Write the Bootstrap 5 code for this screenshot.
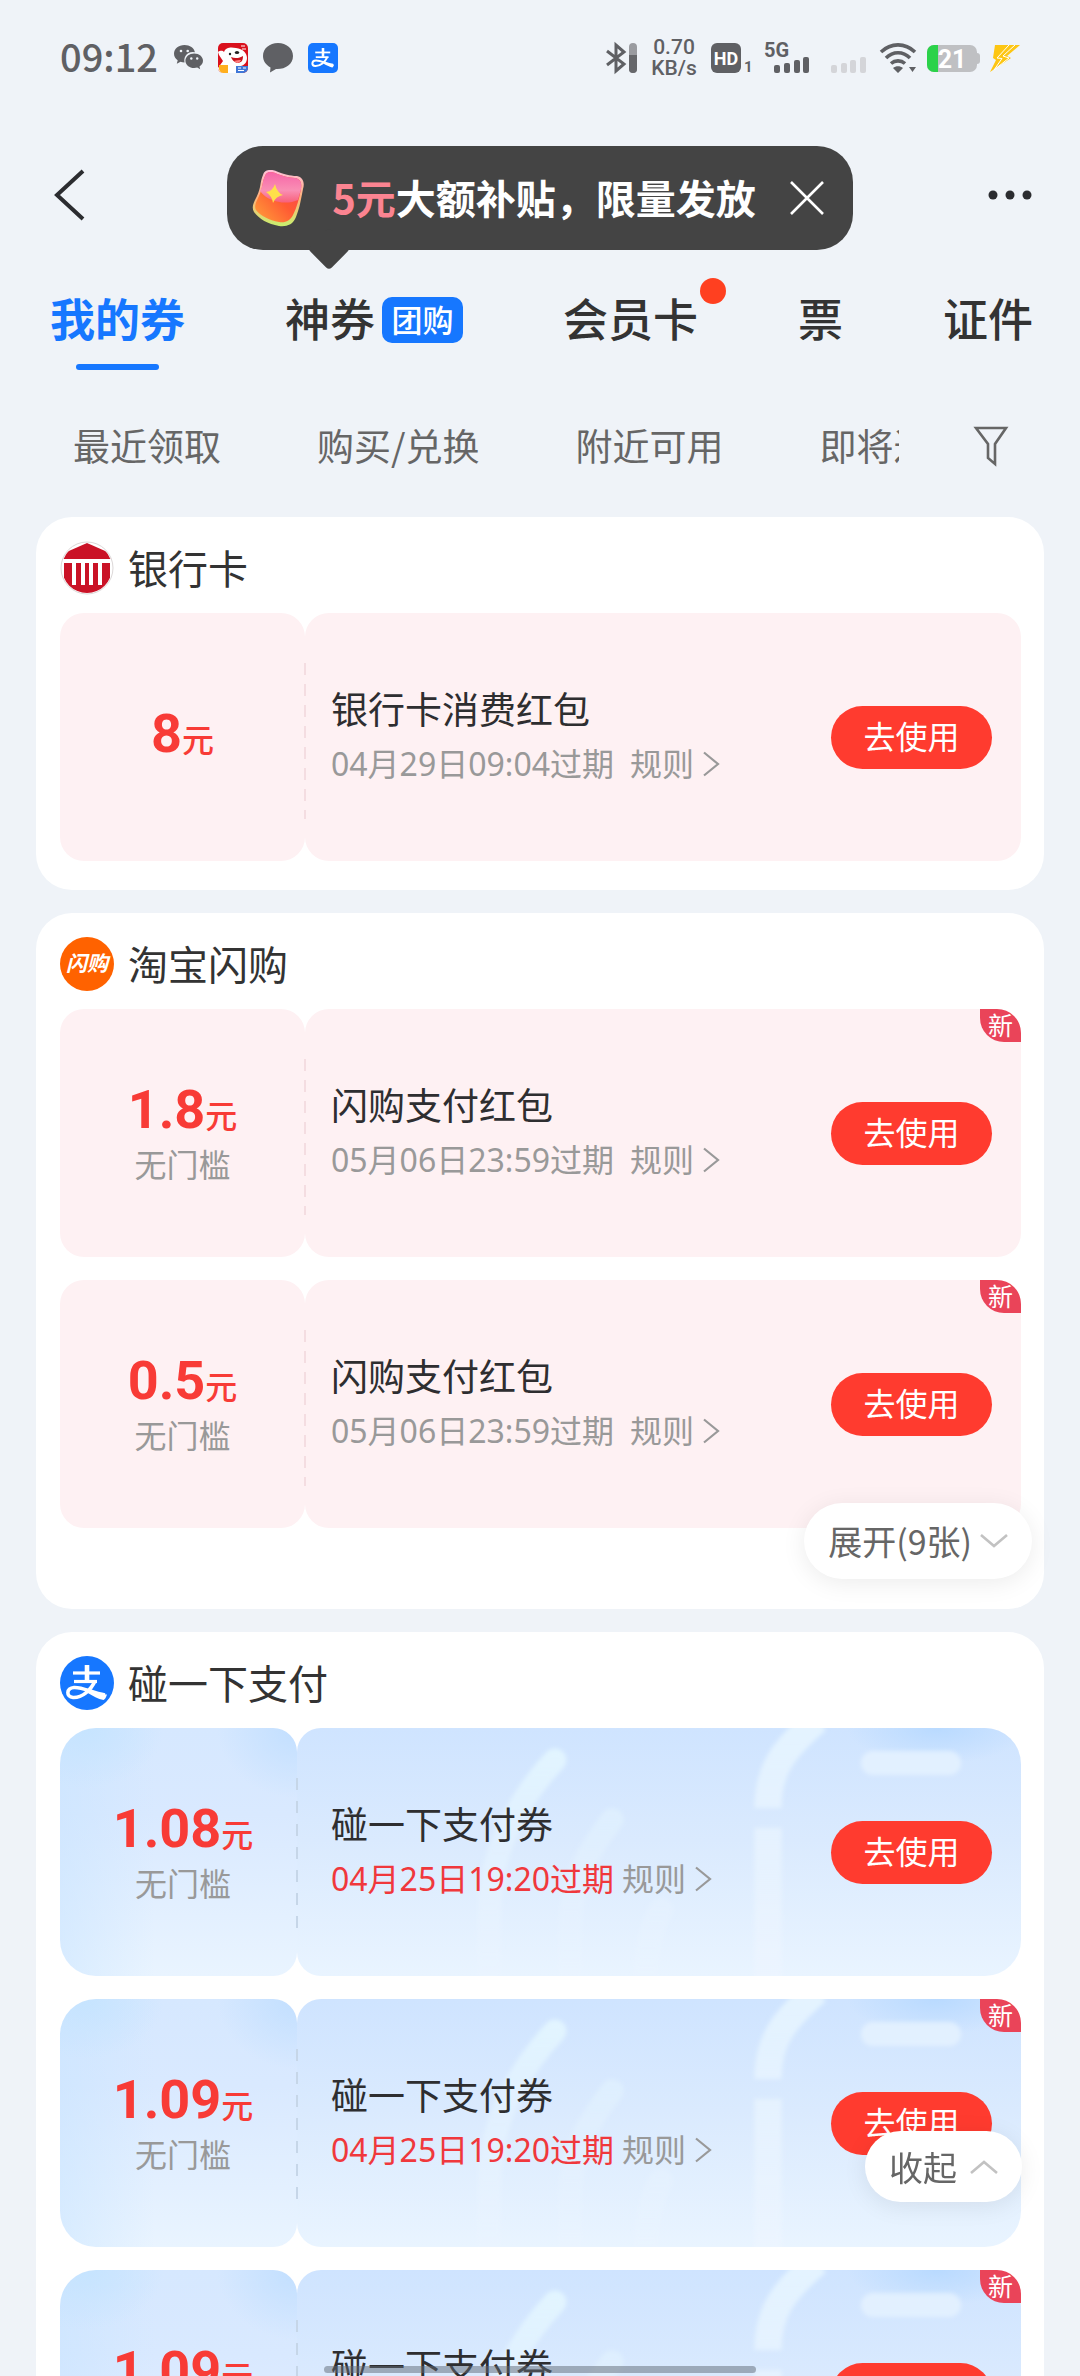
<!DOCTYPE html>
<html lang="zh-CN">
<head>
<meta charset="utf-8">
<meta name="viewport" content="width=device-width, initial-scale=1">
<title>我的券</title>
<link rel="stylesheet" href="https://cdn.jsdelivr.net/npm/bootstrap@5.3.0/dist/css/bootstrap.min.css">
<style>
  body { font-family: "Noto Sans", "Noto Sans CJK SC", sans-serif; color: #333; background: #eff3f8; }
  a { color: inherit; text-decoration: none; }
  svg { display: block; flex: none; overflow: visible; }
  .screen { height: 100vh; overflow: hidden; }
  .cjk { font-family: "Noto Sans CJK SC", sans-serif; }

  /* system status bar */
  .status { height: 116px; padding-left: 60px; padding-right: 60px; color: #5f6064; }
  .clock { font-family: "Noto Sans CJK SC", sans-serif; font-size: 38px; line-height: 40px; height: 44px; font-weight: 500; width: 98px; }
  .speed { width: 52px; font-size: 21px; line-height: 21px; font-weight: 500; font-family: Roboto, sans-serif; white-space: nowrap; }

  /* top bar */
  .appbar { height: 164px; padding: 0 48px; }
  .bare { background: none; border: 0; padding: 0; color: #2b2c30; }
  .side { width: 48px; height: 60px; margin-bottom: 6px; }
  .tip { background: #444; color: #fff; border-radius: 36px; height: 104px; padding: 0 29px 0 25px; font-size: 40px; line-height: 48px; }
  .tip::after { content: ""; position: absolute; left: 87px; bottom: -14px; width: 30px; height: 30px; background: #444; border-radius: 4px; transform: rotate(45deg); }
  .tip b { position: relative; z-index: 1; }
  .tip .hot { color: #fb8491; }
  .tip-text { margin: 0 34px 3px 28px; }

  /* tabs and filters */
  .tabs { height: 90px; gap: 100px; padding: 13px 48px 0 50px; font-size: 45px; line-height: 50px; font-weight: 500; white-space: nowrap; }
  .tabs .on { color: #1677ff; font-weight: 700; }
  .tabs .on::after { content: ""; position: absolute; left: 26px; right: 26px; bottom: 0; height: 6px; border-radius: 3px; background: #1677ff; }
  .pill-tag { background: #1677ff; color: #fff; font-size: 31px; line-height: 44px; font-weight: 500; height: 46px; width: 81px; border-radius: 10px; text-align: center; margin-left: 7px; }
  .dot { position: absolute; width: 26px; height: 26px; border-radius: 50%; background: #ff4020; right: -28px; top: -7px; }
  .filters { height: 147px; padding: 5px 72px 0 73px; color: #666; font-size: 37px; line-height: 44px; white-space: nowrap; }
  .filter-list { gap: 96px; margin-right: 75px; padding-bottom: 3px; }

  /* coupon groups */
  .groups { padding: 0 36px; gap: 23px; }
  .group { background: #fff; border-radius: 36px; padding: 24px 23px 29px 24px; }
  .group.foldable { padding-bottom: 81px; }
  .group h2 { font-size: 40px; line-height: 54px; font-weight: 400; margin: 0 0 18px; height: 54px; gap: 14px; }
  .group h2 span { padding-bottom: 3px; }
  .coupons { gap: 23px; }
  .coupon { height: 248px; }
  .left, .right { position: relative; background: #fef1f3; border-radius: 24px; }
  .left { width: 245px; }
  .right { padding: 0 29px 0 26px; min-width: 0; }
  .right::before { content: ""; position: absolute; left: -1px; top: 50px; bottom: 42px; width: 2px; background: repeating-linear-gradient(#f4dde1 0 12px, transparent 12px 21px); }
  .blue .left { width: 237px; padding-left: 9px; border-radius: 36px 24px 24px 36px;
    background: radial-gradient(80px 70px at 100% 0, #c2dfff, transparent), radial-gradient(80px 60px at 10% 0, #c6e4ff, transparent), linear-gradient(90deg, rgba(200,228,255,.5), transparent 40%), linear-gradient(#d6e8ff, #d9e9ff 35%, #e9f4ff); }
  .blue .right { padding-left: 34px; border-radius: 24px 36px 36px 24px; background: linear-gradient(#cfe4ff, #daeafe 45%, #e9f4ff); }
  .blue .right::before { background: repeating-linear-gradient(#c6d6e8 0 12px, transparent 12px 23px); }
  .wash { position: absolute; left: 0; top: 0; width: 100%; height: 100%; border-radius: inherit; overflow: hidden; }
  .price { color: #f83b36; font-family: Roboto, "Noto Sans CJK SC", sans-serif; font-weight: 700; font-size: 54px; line-height: 58px; }
  .price small { font-size: 32px; font-weight: 500; }
  .limit { color: #999; font-size: 32px; line-height: 44px; margin-top: -5px; }
  .name { font-size: 37px; line-height: 56px; color: #2e2e30; }
  .lines { padding-bottom: 2px; }
  .meta { font-size: 32px; line-height: 56px; color: #999; white-space: nowrap; }
  .due { color: #f0383c; }
  .use { background: #ff3b2f; color: #fff; border: 0; border-radius: 32px; width: 161px; height: 63px; font-size: 32px; line-height: 56px; padding: 0 0 4px; position: relative; }
  .fresh { position: absolute; right: 0; top: 0; width: 41px; height: 33px; border-radius: 0 24px 0 24px; background: #ea4459; color: #fff; font-size: 25px; line-height: 31px; text-align: center; }
  .toggle { position: absolute; z-index: 3; background: #fff; color: #666; border: 0; border-radius: 40px; padding: 0 24px; font-size: 34px; line-height: 72px; gap: 8px; box-shadow: 0 4px 24px rgba(0,0,0,.08); white-space: nowrap; }
  .unfold { right: 12px; bottom: 30px; height: 76px; }
  .fold { position: fixed; right: 58px; bottom: 174px; height: 71px; gap: 13px; }
  .home { position: fixed; z-index: 4; left: 30%; right: 30%; bottom: 3px; height: 7px; border-radius: 4px; background: rgba(95,105,118,.5); }
</style>
<script src="https://cdn.jsdelivr.net/npm/bootstrap@5.3.0/dist/js/bootstrap.bundle.min.js"></script>
</head>
<body>
<svg width="0" height="0" class="position-absolute" aria-hidden="true">
  <defs>
    <linearGradient id="gFade" gradientUnits="userSpaceOnUse" x1="0" y1="0" x2="0" y2="248"><stop offset="0" stop-color="#e6f5ff" stop-opacity=".9"/><stop offset=".6" stop-color="#eef7ff" stop-opacity=".55"/><stop offset="1" stop-color="#f2f7ff" stop-opacity=".35"/></linearGradient>
    <linearGradient id="gLate" gradientUnits="userSpaceOnUse" x1="0" y1="20" x2="0" y2="248"><stop offset="0" stop-color="#e2f5ff"/><stop offset=".5" stop-color="#e6f4ff" stop-opacity=".6"/><stop offset="1" stop-color="#f0f6ff" stop-opacity=".15"/></linearGradient>
    <radialGradient id="gGlow"><stop offset="0" stop-color="#b9daff"/><stop offset="1" stop-color="#b9daff" stop-opacity="0"/></radialGradient>
    <filter id="soft" x="-20%" y="-20%" width="140%" height="140%"><feGaussianBlur stdDeviation="2"/></filter>
    <symbol id="wash" viewBox="0 0 724 248" preserveAspectRatio="xMaxYMin slice">
      <ellipse cx="640" cy="0" rx="90" ry="36" fill="url(#gGlow)"/>
      <g filter="url(#soft)" fill="none" stroke-linecap="round">
        <rect x="564" y="23" width="100" height="24" rx="12" fill="#e5f2ff" fill-opacity=".85"/>
        <path d="M520-8C488 20 471 40 471 80" stroke="url(#gFade)" stroke-width="27" stroke-linecap="butt"/>
        <path d="M471 100V260" stroke="url(#gFade)" stroke-width="27" stroke-linecap="butt"/>
        <path d="M258 32C226 66 196 115 193 172C192 200 192 220 192 260" stroke="url(#gLate)" stroke-width="23"/>
        <path d="M315 92C292 122 274 150 273 200V260" stroke="url(#gLate)" stroke-width="23" stroke-opacity=".7"/>
        <path d="M364 182C353 200 350 220 348 260" stroke="url(#gLate)" stroke-width="24" stroke-opacity=".8"/>
      </g>
    </symbol>
    <symbol id="go" viewBox="0 0 18 26"><path d="M2 1.500L16 13L2 24.500" fill="none" stroke="#999" stroke-width="2.200"/></symbol>
    <symbol id="zhi" viewBox="0 0 54 54">
      <g fill="none" stroke="#fff"><path d="M13 17H40" stroke-width="3.200"/><path d="M27 9V25" stroke-width="4.600"/><path d="M14 25.500H37" stroke-width="3.200"/>
      <path d="M35 25C31 34 22 42 13 41.500C6 41 6 32 14 31.500C23 31 32 37 45 39" stroke-width="3.600"/></g>
      <path d="M29 34.500C35 38 41 38.500 47 38.500C46 41.500 45 43.500 43.500 44C38 43 33 40 27 36.500Z" fill="#fff"/>
    </symbol>
  </defs>
</svg>

<div class="screen d-flex flex-column">
  <div class="status d-flex align-items-center justify-content-between flex-shrink-0">
    <div class="d-flex align-items-center">
      <span class="clock">09:12</span>
      <div class="d-flex align-items-center ms-3" style="gap:15px">
        <svg width="29" height="26" viewBox="0 0 29 26"><path fill="#5f6064" d="M10.500 0C4.500 0 0 3.900 0 8.700c0 2.700 1.500 5 3.700 6.600L2.800 18.800l3.700-2c1.200.4 2.600.6 4 .6A8.500 8.500 0 0 1 20.900 7.200C20.200 3 15.800 0 10.500 0Z"/><path fill="#5f6064" d="M20.200 8.400c-4.900 0-8.800 3.200-8.800 7.300s3.900 7.300 8.800 7.300c1.100 0 2.100-.2 3-.4l3 1.700-.7-2.900c2.100-1.300 3.500-3.400 3.500-5.700 0-4.100-3.900-7.300-8.800-7.300Z"/><circle cx="7" cy="6" r="1.300" fill="#eff3f8"/><circle cx="13.700" cy="6" r="1.300" fill="#eff3f8"/><circle cx="17.300" cy="13.500" r="1.200" fill="#eff3f8"/><circle cx="23.200" cy="13.500" r="1.200" fill="#eff3f8"/></svg>
        <svg width="30" height="30" viewBox="0 0 30 30"><rect width="30" height="30" rx="5" fill="#d9101d"/><path d="M0 9C3 7 5 8 6 9C8 4 13 4 18 5C25 6 29 10 29 15C29 21 24 24 19 23L21 30H5A5 5 0 0 1 0 25L5 18L1 12Z" fill="#fff"/><circle cx="12" cy="11" r="1.200" fill="#222"/><ellipse cx="19" cy="9.500" rx="2.200" ry="1.500" fill="#222"/><path d="M13 14C17 16 22 15 25 13C25 18 23 20 19 20C16 19 14 17 13 14Z" fill="#c8141e"/><path d="M16 18c3-1 5-1 7-1-1 2-2 3-4 3z" fill="#ff8080"/><path d="M1 22H10V30H5A5 5 0 0 1 1 26Z" fill="#ffaf1f"/><path d="M18 23H30V25A5 5 0 0 1 25 30H18Z" fill="#3f77d8"/><path d="M20 25H23M25 25H28M20 27.500H26M23 3H27M24 6H28" stroke="#fff"/></svg>
        <svg width="30" height="30" viewBox="0 0 30 30"><path fill="#5f6064" d="M15 0C6.500 0 0 5.500 0 13c0 5 3 9 7.500 11.500L7 29.500l6-3.500C22 26.500 30 21.500 30 13 30 5.500 23.500 0 15 0Z"/></svg>
        <svg width="30" height="30" viewBox="0 0 54 54"><rect width="54" height="54" rx="9" fill="#1677ff"/><use href="#zhi"/></svg>
      </div>
    </div>
    <div class="d-flex align-items-center" style="gap:10px">
      <svg width="34" height="32" viewBox="0 0 34 32"><path d="M3 9L20 22L12 29V3L20 10L3 23" fill="none" stroke="#5f6064" stroke-width="3"/><rect x="25" y="1" width="8" height="30" rx="4" fill="#9a9ba0"/><path d="M25 13H33V27A4 4 0 0 1 25 27Z" fill="#66676b"/></svg>
      <div class="speed text-center">0.70<br>KB/s</div>
      <svg width="44" height="30" viewBox="0 0 44 30"><rect x="1" width="30" height="30" rx="6" fill="#5f6064"/><text x="16" y="22" text-anchor="middle" font-family="Roboto" font-weight="700" font-size="18" fill="#fff">HD</text><text x="34" y="29" font-family="Roboto" font-weight="700" font-size="15" fill="#5f6064">1</text></svg>
      <svg width="56" height="32" viewBox="0 0 56 32"><text x="0" y="15" font-family="Roboto" font-weight="700" font-size="20" fill="#5f6064">5G</text><g fill="#5f6064"><rect x="10" y="23" width="6" height="8" rx="2"/><rect x="20" y="21" width="6" height="10" rx="2"/><rect x="30" y="18" width="6" height="13" rx="2"/><rect x="39" y="15" width="6" height="16" rx="2"/></g></svg>
      <svg width="40" height="32" viewBox="0 0 40 32"><g fill="#d4d5d9"><rect x="1" y="23" width="6" height="8" rx="2"/><rect x="11" y="21" width="6" height="10" rx="2"/><rect x="20" y="18" width="6" height="13" rx="2"/><rect x="30" y="15" width="6" height="16" rx="2"/></g></svg>
      <svg width="37" height="30" viewBox="0 0 37 30"><g fill="none" stroke="#5f6064" stroke-width="3.600"><path d="M1 9C11-.500 25-.500 35 9"/><path d="M6 15C13 8 23 8 30 15"/><path d="M11 20.500C15 17 21 17 25 20.500"/></g><path d="M13 25C16 22.500 20 22.500 23 25L18 30ZM29 24H36L32.500 29Z" fill="#5f6064"/></svg>
      <svg width="53" height="27" viewBox="0 0 53 27"><rect width="50" height="27" rx="7" fill="#bfc0c3"/><path d="M50 8Q53 8 53 11V16Q53 19 50 19Z" fill="#bfc0c3"/><path d="M11 0H7A7 7 0 0 0 0 7V20A7 7 0 0 0 7 27H11Z" fill="#2bd24a"/><text x="25" y="23" text-anchor="middle" font-family="Roboto" font-weight="700" font-size="25" fill="#fff">21</text></svg>
      <svg width="30" height="27" viewBox="0 0 30 27"><path d="M5 0H30L17 11L21 13L0 27L6 15L3 13Z" fill="#fdc613"/><path d="M19 0L7 13L12 13.500L4 25L19 13L13 11L25 0" fill="none" stroke="#fff" stroke-width="1"/></svg>
    </div>
  </div>

  <header class="appbar d-flex align-items-center justify-content-between flex-shrink-0">
    <button class="bare side" aria-label="返回"><svg style="margin-left:7px" width="30" height="50" viewBox="0 0 30 50"><path d="M28 1L2 25L28 49" fill="none" stroke="currentColor" stroke-width="4"/></svg></button>
    <div class="tip cjk position-relative d-flex align-items-center">
      <svg width="52" height="58" viewBox="0 0 52 58"><defs><linearGradient id="ga" x1="0" y1="1" x2="1" y2="0"><stop offset="0" stop-color="#ff9a2e"/><stop offset=".5" stop-color="#ff4b35"/><stop offset="1" stop-color="#ff3d55"/></linearGradient><linearGradient id="gb" x1="0" y1="0" x2="0" y2="1"><stop offset="0" stop-color="#f765a8"/><stop offset=".6" stop-color="#f98fb4"/><stop offset="1" stop-color="#f8607a"/></linearGradient><linearGradient id="gd" x1="1" y1="0" x2="0" y2="1"><stop offset="0" stop-color="#f7435c"/><stop offset=".5" stop-color="#ff5a33"/><stop offset="1" stop-color="#ffa23a"/></linearGradient><linearGradient id="gc" x1="0" y1="0" x2="0" y2="1"><stop offset="0" stop-color="#ffc0da"/><stop offset=".5" stop-color="#ffb27a"/><stop offset="1" stop-color="#c8f06e"/></linearGradient></defs>
        <path d="M18 1C24 0 28 6 45 7C51 8 53 14 51 20C49 30 48 38 44 48C41 56 34 58 27 57C16 55 7 50 2 43C-1 38 2 33 5 27C9 19 8 13 11 6C12 2 15 1 18 1Z" fill="url(#gc)"/>
        <path d="M18 3C24 3 29 8 43 9C49 10 50 15 49 20C47 30 45 38 41 46C38 52 33 54 27 53C17 51 9 47 4 41C2 37 4 33 7 27C11 19 10 13 13 7C14 4 16 3 18 3Z" fill="url(#gd)"/>
        <path d="M18 3C24 3 29 8 43 9C49 10 50 15 49 20L46 31C35 36 17 34 8 22C11 18 10 13 13 7C14 4 16 3 18 3Z" fill="url(#gb)"/>
        <path d="M23 15Q25 24 31 26Q24 27 21 34Q20 27 14 23Q21 22 23 15Z" fill="#ffe04a"/></svg>
      <b class="tip-text"><span class="hot">5元</span>大额补贴，限量发放</b>
      <button class="bare text-white" aria-label="关闭"><svg width="34" height="34" viewBox="0 0 34 34"><path d="M1 1L33 33M33 1L1 33" stroke="currentColor" stroke-width="2.600"/></svg></button>
    </div>
    <button class="bare side" aria-label="更多"><svg width="48" height="12" viewBox="0 0 48 12" fill="currentColor"><circle cx="9" cy="6" r="4.500"/><circle cx="26" cy="6" r="4.500"/><circle cx="43" cy="6" r="4.500"/></svg></button>
  </header>

  <nav class="tabs cjk d-flex flex-shrink-0">
    <a href="#" class="on position-relative">我的券</a>
    <a href="#" class="d-flex">神券<span class="pill-tag mt-1">团购</span></a>
    <a href="#"><span class="position-relative">会员卡<i class="dot"></i></span></a>
    <a href="#">票</a>
    <a href="#">证件</a>
  </nav>

  <div class="filters cjk d-flex align-items-center flex-shrink-0">
    <div class="filter-list d-flex flex-fill overflow-hidden">
      <a href="#">最近领取</a><a href="#">购买/兑换</a><a href="#">附近可用</a><a href="#">即将过期</a>
    </div>
    <button class="bare" aria-label="筛选"><svg width="34" height="40" viewBox="0 0 34 40"><path d="M2 2H32L21 18V38L14 32V18Z" fill="none" stroke="#666" stroke-width="2.600"/></svg></button>
  </div>

  <main class="groups d-flex flex-column">
    <section class="group">
      <h2 class="cjk d-flex align-items-center"><svg width="54" height="54" viewBox="0 0 54 54"><clipPath id="cb"><circle cx="27" cy="27" r="25"/></clipPath><circle cx="27" cy="27" r="26" fill="#fff" stroke="#dcd8d8"/><g clip-path="url(#cb)" fill="#ca1226"><path d="M0 18V14L27 2L54 14V18Z"/><path d="M4 22H12V44H16V22H21V44H25V22H29V44H33V22H38V44H42V22H50V52H4Z"/></g></svg><span>银行卡</span></h2>
      <article class="coupon d-flex">
        <div class="left d-flex flex-column align-items-center justify-content-center flex-shrink-0"><div class="price">8<small>元</small></div></div>
        <div class="right flex-fill d-flex align-items-center justify-content-between">
          <div class="lines"><div class="name cjk">银行卡消费红包</div><div class="meta d-flex align-items-center">04月29日09:04过期<a href="#" class="d-flex align-items-center ms-3">规则<svg class="ms-2" width="18" height="26"><use href="#go"/></svg></a></div></div>
          <button class="use cjk">去使用</button>
        </div>
      </article>
    </section>

    <section class="group foldable position-relative">
      <h2 class="cjk d-flex align-items-center"><svg width="54" height="54" viewBox="0 0 54 54"><circle cx="27" cy="27" r="27" fill="#ff6200"/><text x="27" y="34" text-anchor="middle" font-family="Noto Sans CJK SC" font-weight="700" font-style="italic" font-size="21" fill="#fff">闪购</text></svg><span>淘宝闪购</span></h2>
      <div class="coupons d-flex flex-column">
        <article class="coupon d-flex">
          <div class="left d-flex flex-column align-items-center justify-content-center flex-shrink-0"><div class="price">1.8<small>元</small></div><div class="limit cjk">无门槛</div></div>
          <div class="right flex-fill d-flex align-items-center justify-content-between">
            <div class="lines"><div class="name cjk">闪购支付红包</div><div class="meta d-flex align-items-center">05月06日23:59过期<a href="#" class="d-flex align-items-center ms-3">规则<svg class="ms-2" width="18" height="26"><use href="#go"/></svg></a></div></div>
            <button class="use cjk">去使用</button><span class="fresh cjk">新</span>
          </div>
        </article>
        <article class="coupon d-flex">
          <div class="left d-flex flex-column align-items-center justify-content-center flex-shrink-0"><div class="price">0.5<small>元</small></div><div class="limit cjk">无门槛</div></div>
          <div class="right flex-fill d-flex align-items-center justify-content-between">
            <div class="lines"><div class="name cjk">闪购支付红包</div><div class="meta d-flex align-items-center">05月06日23:59过期<a href="#" class="d-flex align-items-center ms-3">规则<svg class="ms-2" width="18" height="26"><use href="#go"/></svg></a></div></div>
            <button class="use cjk">去使用</button><span class="fresh cjk">新</span>
          </div>
        </article>
      </div>
      <button class="toggle unfold cjk d-flex align-items-center">展开(9张)<svg width="28" height="16" viewBox="0 0 28 16"><path d="M1 2L14 13L27 2" fill="none" stroke="#c2c2c2" stroke-width="2.600"/></svg></button>
    </section>

    <section class="group blue">
      <h2 class="cjk d-flex align-items-center"><svg width="54" height="54" viewBox="0 0 54 54"><circle cx="27" cy="27" r="27" fill="#1677ff"/><use href="#zhi"/></svg><span>碰一下支付</span></h2>
      <div class="coupons d-flex flex-column">
        <article class="coupon d-flex">
          <div class="left d-flex flex-column align-items-center justify-content-center flex-shrink-0"><div class="price">1.08<small>元</small></div><div class="limit cjk">无门槛</div></div>
          <div class="right flex-fill d-flex align-items-center justify-content-between"><svg class="wash"><use href="#wash"/></svg>
            <div class="lines position-relative"><div class="name cjk">碰一下支付券</div><div class="meta d-flex align-items-center"><span class="due">04月25日19:20过期</span><a href="#" class="d-flex align-items-center ms-2">规则<svg class="ms-2" width="18" height="26"><use href="#go"/></svg></a></div></div>
            <button class="use cjk">去使用</button>
          </div>
        </article>
        <article class="coupon d-flex">
          <div class="left d-flex flex-column align-items-center justify-content-center flex-shrink-0"><div class="price">1.09<small>元</small></div><div class="limit cjk">无门槛</div></div>
          <div class="right flex-fill d-flex align-items-center justify-content-between"><svg class="wash"><use href="#wash"/></svg>
            <div class="lines position-relative"><div class="name cjk">碰一下支付券</div><div class="meta d-flex align-items-center"><span class="due">04月25日19:20过期</span><a href="#" class="d-flex align-items-center ms-2">规则<svg class="ms-2" width="18" height="26"><use href="#go"/></svg></a></div></div>
            <button class="use cjk">去使用</button><span class="fresh cjk">新</span>
          </div>
        </article>
        <article class="coupon d-flex">
          <div class="left d-flex flex-column align-items-center justify-content-center flex-shrink-0"><div class="price">1.09<small>元</small></div><div class="limit cjk">无门槛</div></div>
          <div class="right flex-fill d-flex align-items-center justify-content-between"><svg class="wash"><use href="#wash"/></svg>
            <div class="lines position-relative"><div class="name cjk">碰一下支付券</div><div class="meta d-flex align-items-center"><span class="due">04月25日19:20过期</span><a href="#" class="d-flex align-items-center ms-2">规则<svg class="ms-2" width="18" height="26"><use href="#go"/></svg></a></div></div>
            <button class="use cjk">去使用</button><span class="fresh cjk">新</span>
          </div>
        </article>
      </div>
      <button class="toggle fold cjk d-flex align-items-center">收起<svg width="28" height="16" viewBox="0 0 28 16"><path d="M1 14L14 3L27 14" fill="none" stroke="#c2c2c2" stroke-width="2.600"/></svg></button>
    </section>
  </main>
</div>
<div class="home"></div>
</body>
</html>
